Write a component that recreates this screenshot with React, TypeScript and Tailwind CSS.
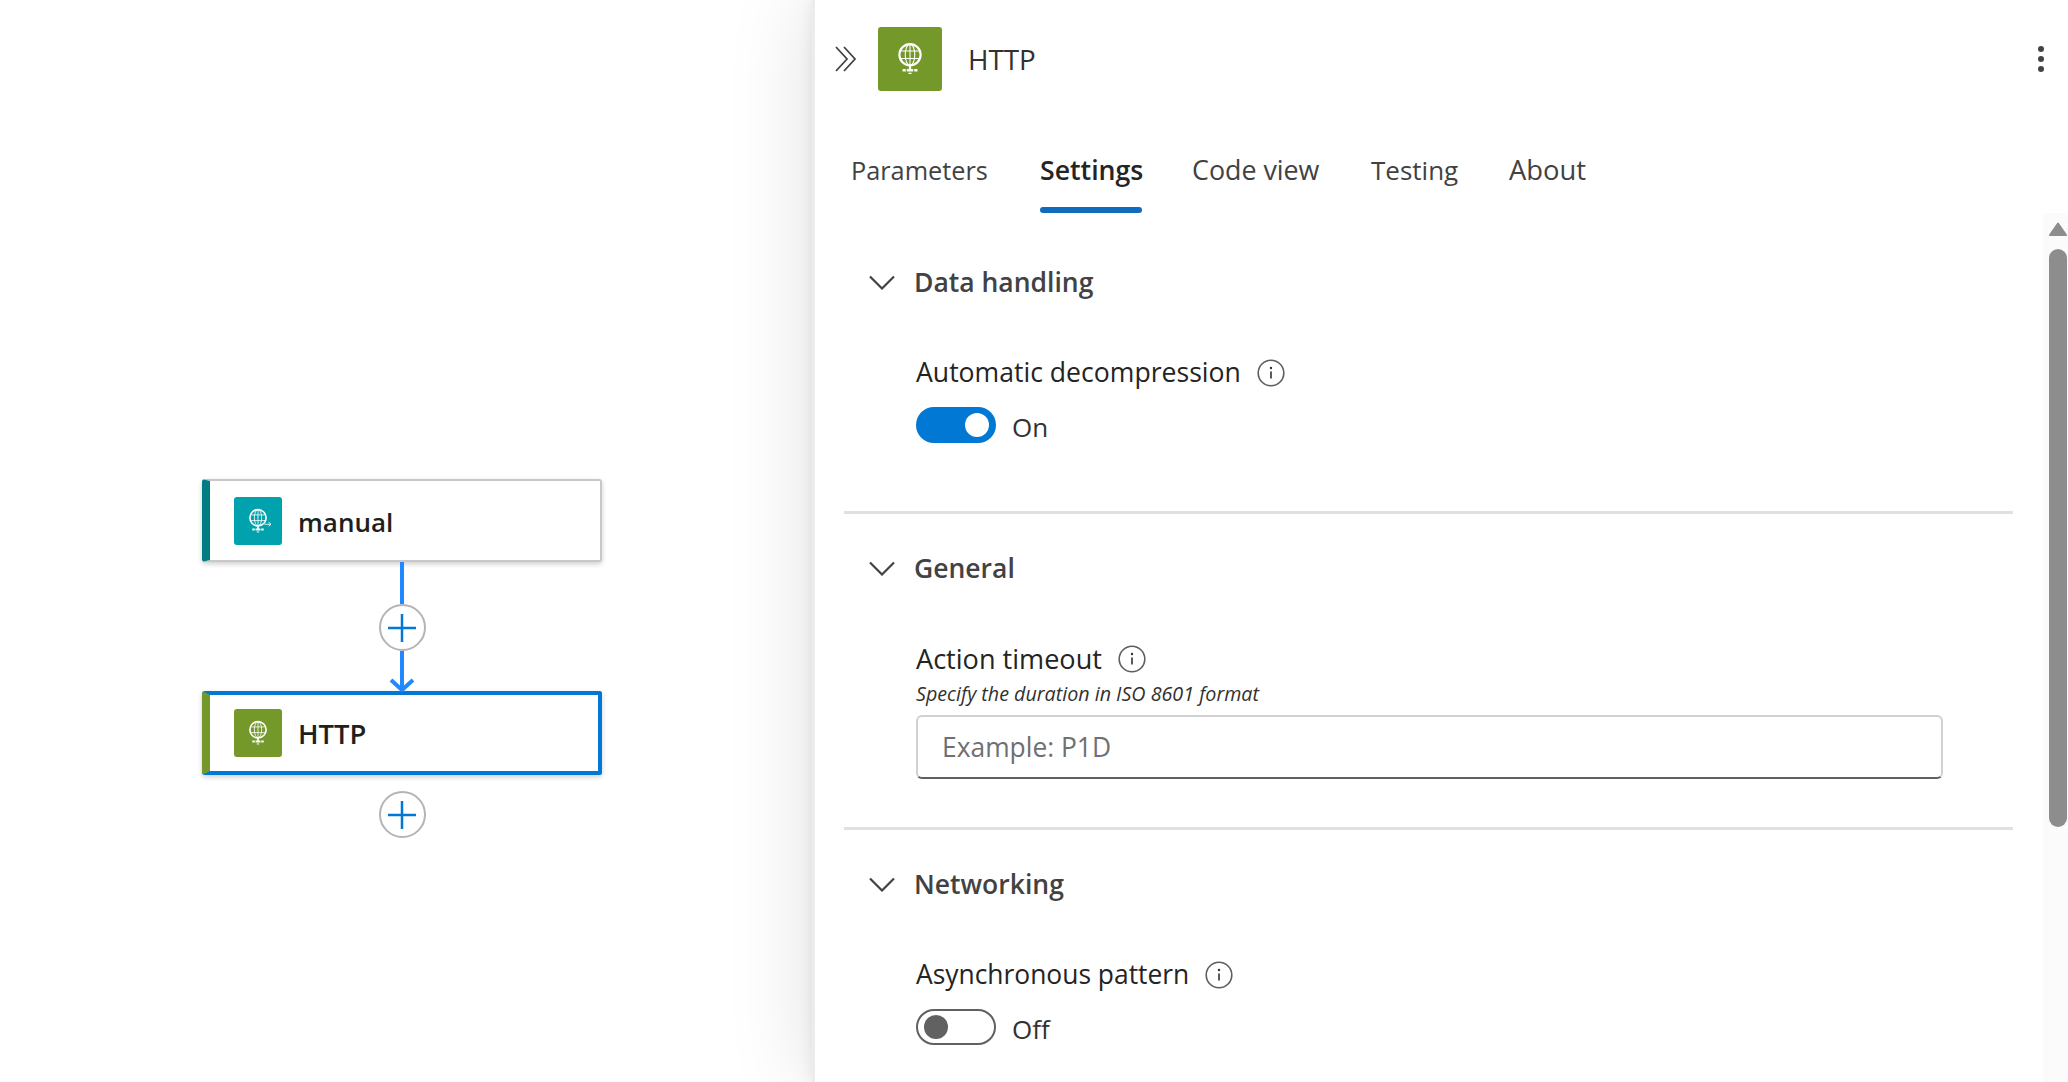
import React from "react";

const font = { fontFamily: '"Open Sans", "Noto Sans", sans-serif' };

function Globe({ size = 34, arrow = false }: { size?: number; arrow?: boolean }) {
  return (
    <svg width={size} height={size} viewBox="0 0 32 32" fill="none" stroke="white">
      <circle cx="16" cy="12" r="10" strokeWidth="2" />
      <ellipse cx="16" cy="12" rx="4.5" ry="10" strokeWidth="1" />
      <path d="M6.5 8.5h19M6.5 15.5h19M16 2v20" strokeWidth="1" />
      <path d="M16 22v4" strokeWidth="2" />
      <path d="M9 26.5h14" strokeWidth="2.4" strokeDasharray="3 1 6 1 3" />
      <path d="M14.5 29.5h3" strokeWidth="1.2" />
      {arrow && <path d="M24 20h8M29 17.5l3 2.5-3 2.5" strokeWidth="1" />}
    </svg>
  );
}

function Node({ label, selected, tile, arrow }: { label: string; selected?: boolean; tile: string; arrow?: boolean }) {
  return (
    <div
      className={
        selected
          ? "w-[400px] h-[84px] bg-white rounded-[3px] border-[4px] border-[#0078d4] border-l-[8px] border-l-[#74992a] shadow-[0_2px_5px_rgba(0,0,0,0.2)] flex items-center"
          : "w-[400px] h-[83px] bg-white rounded-[3px] border-2 border-[#c8c8c8] border-l-[8px] border-l-[#007c85] shadow-[0_2px_5px_rgba(0,0,0,0.2)] flex items-center"
      }
    >
      <div className={`ml-6 w-12 h-12 rounded-[3px] flex items-center justify-center ${tile}`}>
        <Globe size={26} arrow={arrow} />
      </div>
      <span className={selected ? "ml-4 mt-[2px] text-[27.4px] font-semibold text-[#201f1e]" : "ml-4 mt-[3px] text-[26px] font-semibold text-[#201f1e]"}>{label}</span>
    </div>
  );
}

function AddButton() {
  return (
    <div className="w-[47px] h-[47px] rounded-full border-2 border-[#b4b4b8] bg-white flex items-center justify-center">
      <svg width="30" height="30" viewBox="0 0 30 30" stroke="#0078d4" strokeWidth="2.5">
        <path d="M15 1v28M1 15h28" />
      </svg>
    </div>
  );
}

function Info() {
  return (
    <svg width="28" height="28" viewBox="0 0 28 28" fill="none" className="ml-4 shrink-0">
      <circle cx="14" cy="14" r="12.8" stroke="#605e5c" strokeWidth="1.6" />
      <path d="M14 12.5v7" stroke="#323130" strokeWidth="1.6" />
      <circle cx="14" cy="9" r="1.2" fill="#323130" />
    </svg>
  );
}

function SectionHead({ title }: { title: string }) {
  return (
    <div className="h-9 flex items-center text-[#424242]">
      <svg width="26" height="15" viewBox="0 0 26 15" fill="none" stroke="#424242" strokeWidth="2.2" className="ml-[25px]">
        <path d="M1 1.5 13 13.5 25 1.5" />
      </svg>
      <span className="ml-[19px] mt-[2px] text-[26.5px] font-semibold">{title}</span>
    </div>
  );
}

function Label({ text, size }: { text: string; size: string }) {
  return (
    <div className={`h-9 flex items-center text-[#242424] ml-[72px] ${size}`}>
      {text}
      <Info />
    </div>
  );
}

const tabs = [
  { name: "Parameters", width: "w-[189px]", size: "text-[25.3px]" },
  { name: "Settings", width: "w-[152px]", size: "text-[26.7px]" },
  { name: "Code view", width: "w-[179px]", size: "text-[26.8px]" },
  { name: "Testing", width: "w-[138px]", size: "text-[26px]" },
  { name: "About", width: "w-[100px]", size: "text-[27.4px]" },
];

export default function App() {
  return (
    <div className="h-screen w-full flex overflow-hidden bg-white" style={font}>
      {/* canvas */}
      <div className="w-[812px] shrink-0 pt-[479px] pl-[202px]">
        <Node label="manual" tile="bg-[#00a2ad]" arrow />
        <div className="w-[400px] flex flex-col items-center">
          <div className="w-1 h-[42px] bg-[#2188ff]" />
          <AddButton />
          <div className="w-1 h-[38px] bg-[#2188ff]" />
          <svg width="26" height="14" viewBox="0 0 26 14" fill="none" stroke="#2188ff" strokeWidth="4" className="-mt-[11px] -mb-[1px]">
            <path d="M2 2l11 10L24 2" />
          </svg>
        </div>
        <Node label="HTTP" selected tile="bg-[#74992a]" />
        <div className="w-[400px] flex justify-center mt-4">
          <AddButton />
        </div>
      </div>

      {/* details panel */}
      <div className="flex-1 flex flex-col border-l-[3px] border-[#ececec] bg-white shadow-[0_0_80px_rgba(0,0,0,0.13),0_0_14px_rgba(0,0,0,0.08)]">
        <div className="h-[118px] shrink-0 flex items-center">
          <svg width="22" height="26" viewBox="0 0 22 26" fill="none" stroke="#424242" strokeWidth="1.8" className="ml-[20px]">
            <path d="M1 1l11 12L1 25M9 1l11 12L9 25" />
          </svg>
          <div className="ml-[21px] w-16 h-16 rounded-[3px] bg-[#74992a] flex items-center justify-center">
            <Globe size={34} />
          </div>
          <span className="ml-[26px] mt-[2px] text-[27.8px] font-normal text-[#323130]">HTTP</span>
          <div className="ml-auto mr-[24px] flex flex-col gap-1">
            <div className="w-1.5 h-1.5 rounded-full bg-[#424242]" />
            <div className="w-1.5 h-1.5 rounded-full bg-[#424242]" />
            <div className="w-1.5 h-1.5 rounded-full bg-[#424242]" />
          </div>
        </div>

        <div className="h-[95px] shrink-0 flex pl-[36px] items-start">
          {tabs.map((t) => (
            <div key={t.name} className={`relative h-[95px] pt-[32px] leading-[40px] ${t.width}`}>
              <span className={t.name === "Settings" ? `${t.size} font-semibold text-[#242424]` : `${t.size} text-[#424242]`}>{t.name}</span>
              {t.name === "Settings" && <div className="absolute left-0 w-[102px] top-[89px] h-1.5 rounded-[3px] bg-[#0f6cbd]" />}
            </div>
          ))}
        </div>

        <div className="flex-1 flex min-h-0">
          <div className="flex-1 min-w-0 pl-[29px] pr-[30px] pt-[51px] overflow-hidden">
            <SectionHead title="Data handling" />
            <div className="mt-[55px]">
              <Label text="Automatic decompression" size="text-[26.6px]" />
            </div>
            <div className="ml-[72px] mt-[16px] flex items-start">
              <div className="w-20 h-9 rounded-full bg-[#0078d4] flex items-center justify-end pr-[7px]">
                <div className="w-6 h-6 rounded-full bg-white" />
              </div>
              <span className="ml-4 text-[26px] leading-[36px] mt-[2px] text-[#323130]">On</span>
            </div>
            <div className="mt-[66px] h-[3px] bg-[#e0e0e0]" />

            <div className="mt-[36px]">
              <SectionHead title="General" />
            </div>
            <div className="mt-[55px]">
              <Label text="Action timeout" size="text-[27.1px]" />
            </div>
            <div className="ml-[72px] mt-[3px] text-[19.7px] leading-[28px] italic text-[#323130]">Specify the duration in ISO 8601 format</div>
            <div className="ml-[72px] mr-[70px] mt-[7px] h-16 rounded-[6px] border-2 border-[#d1d1d1] border-b-[#616161] flex items-center pl-[24px] pt-[2px] text-[26.4px] text-[#707070]">
              Example: P1D
            </div>
            <div className="mt-[48px] h-[3px] bg-[#e0e0e0]" />

            <div className="mt-[36px]">
              <SectionHead title="Networking" />
            </div>
            <div className="mt-[55px]">
              <Label text="Asynchronous pattern" size="text-[26.4px]" />
            </div>
            <div className="ml-[72px] mt-[16px] flex items-start">
              <div className="w-20 h-9 rounded-full border-2 border-[#616161] flex items-center pl-[6px]">
                <div className="w-6 h-6 rounded-full bg-[#616161]" />
              </div>
              <span className="ml-4 text-[26px] leading-[36px] mt-[2px] text-[#323130]">Off</span>
            </div>
          </div>

          {/* scrollbar */}
          <div className="w-[25px] shrink-0 bg-[#fbfbfb] pl-[6px] pr-[1px] pt-[9px]">
            <svg width="18" height="14" viewBox="0 0 18 14" fill="#8d8d8d" stroke="#8d8d8d" strokeWidth="2" strokeLinejoin="round">
              <path d="M9 1.5 17 13H1z" />
            </svg>
            <div className="mt-[13px] h-[578px] rounded-full bg-[#8d8d8d]" />
          </div>
        </div>
      </div>
    </div>
  );
}
